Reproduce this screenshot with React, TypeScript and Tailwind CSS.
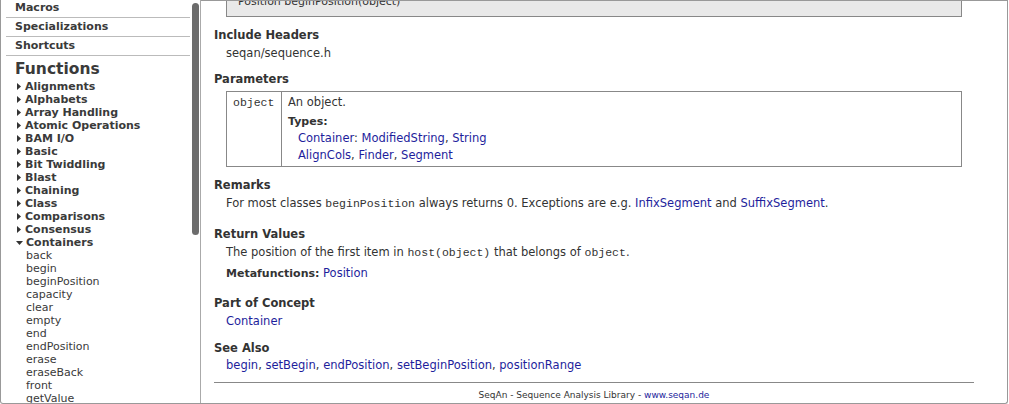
import React from 'react';

const sections = ['Macros', 'Specializations', 'Shortcuts'];

const groups = [
  'Alignments',
  'Alphabets',
  'Array Handling',
  'Atomic Operations',
  'BAM I/O',
  'Basic',
  'Bit Twiddling',
  'Blast',
  'Chaining',
  'Class',
  'Comparisons',
  'Consensus',
];

const containerFns = [
  'back',
  'begin',
  'beginPosition',
  'capacity',
  'clear',
  'empty',
  'end',
  'endPosition',
  'erase',
  'eraseBack',
  'front',
  'getValue',
  'getValueById',
];

const Arrow = ({ open }: { open?: boolean }) =>
  open ? (
    <svg width="7" height="4" viewBox="0 0 7 4" className="ml-[1px] mr-[3px] shrink-0">
      <path d="M0 0 L7 0 L3.5 4 Z" fill="#333" />
    </svg>
  ) : (
    <svg width="4" height="7" viewBox="0 0 4 7" className="ml-[2px] mr-[4px] shrink-0">
      <path d="M0 0 L4 3.5 L0 7 Z" fill="#333" />
    </svg>
  );

const A = ({ children }: { children: React.ReactNode }) => (
  <a className="text-[#1e1e9c] cursor-pointer">{children}</a>
);

const Code = ({ children }: { children: React.ReactNode }) => (
  <code className="font-['Liberation_Mono',monospace] text-[11.5px] leading-none">{children}</code>
);

const Heading = ({ children, className = '' }: { children: React.ReactNode; className?: string }) => (
  <h3 className={`font-bold text-[11.5px] leading-[18px] text-[#333] ${className}`}>{children}</h3>
);

const Sidebar = () => (
  <div className="relative w-[200px] shrink-0 h-full overflow-hidden border-r border-[#aaa]">
    <div className="-mt-[1px] pl-[5px] pr-[10px]">
      {sections.map((s) => (
        <div key={s} className="border-b border-[#bbb] pl-[9px] leading-[18px] font-bold text-[11px] text-[#3a3a3a]">
          {s}
        </div>
      ))}
      <div className="mt-[3px] pl-[9px] leading-[20px] font-bold text-[15.5px] text-[#3a3a3a]">Functions</div>
      <ul className="pt-[1px] pl-[9px]">
        {groups.map((g) => (
          <li key={g} className="flex items-center leading-[13px] font-bold text-[11px] text-[#3a3a3a]">
            <Arrow />
            {g}
          </li>
        ))}
        <li className="flex items-center leading-[13px] font-bold text-[11px] text-[#3a3a3a]">
          <Arrow open />
          Containers
        </li>
        {containerFns.map((f) => (
          <li key={f} className="pl-[11px] leading-[13px] text-[11px] text-[#3a3a3a]">
            {f}
          </li>
        ))}
      </ul>
    </div>
    <div className="absolute left-[191px] top-[3px] w-[7px] h-[232px] rounded-full bg-[#6c6c6c]" />
  </div>
);

const Content = () => (
  <div className="flex-1 h-full overflow-hidden border-t border-[#999] pl-[13px] pr-[33px] text-[11.5px] text-[#333]">
    <div className="-mt-[14px] mx-[12px] border border-[#888] bg-[#e9e9e9] pl-[11px] py-[5px] leading-[18px] text-[11px]">
      Position beginPosition(object)
    </div>

    <Heading className="mt-[9px]">Include Headers</Heading>
    <p className="pl-[12px] leading-[18px]">seqan/sequence.h</p>

    <Heading className="mt-[8px]">Parameters</Heading>
    <table className="mt-[3px] ml-[12px] w-[736px] border-collapse border border-[#888]">
      <tbody>
        <tr>
          <td className="w-[55px] align-top border-r border-[#888] pl-[6px] pt-[2px] leading-[17px]">
            <Code>object</Code>
          </td>
          <td className="align-top pl-[6px] pt-[2px] pb-[2px] leading-[17px]">
            <p>An object.</p>
            <p className="mt-[2px] font-bold text-[11px]">Types:</p>
            <p className="pl-[10px]">
              <A>Container</A>: <A>ModifiedString</A>, <A>String</A>
            </p>
            <p className="pl-[10px]">
              <A>AlignCols</A>, <A>Finder</A>, <A>Segment</A>
            </p>
          </td>
        </tr>
      </tbody>
    </table>

    <Heading className="mt-[9px]">Remarks</Heading>
    <p className="pl-[12px] leading-[18px]">
      For most classes <Code>beginPosition</Code> always returns 0. Exceptions are e.g. <A>InfixSegment</A> and{' '}
      <A>SuffixSegment</A>.
    </p>

    <Heading className="mt-[13px]">Return Values</Heading>
    <p className="pl-[12px] leading-[18px]">
      The position of the first item in <Code>host(object)</Code> that belongs of <Code>object</Code>.
    </p>
    <p className="mt-[3px] pl-[12px] leading-[18px]">
      <span className="font-bold text-[11px]">Metafunctions:</span> <A>Position</A>
    </p>

    <Heading className="mt-[11px]">Part of Concept</Heading>
    <p className="pl-[12px] leading-[18px]">
      <A>Container</A>
    </p>

    <Heading className="mt-[9px]">See Also</Heading>
    <p className="pl-[12px] leading-[17px]">
      <A>begin</A>, <A>setBegin</A>, <A>endPosition</A>, <A>setBeginPosition</A>, <A>positionRange</A>
    </p>

    <hr className="mt-[8px] border-0 border-t border-[#888]" />
    <p className="mt-[3px] text-center text-[9px] leading-[18px]">
      SeqAn - Sequence Analysis Library - <A>www.seqan.de</A>
    </p>
  </div>
);

export default function App() {
  return (
    <div className="w-[1009px] h-[404px] bg-white overflow-hidden font-['DejaVu_Sans','Verdana',sans-serif]">
      <div className="flex w-[1008px] h-[404px] border-l border-b border-r border-[#999] rounded-b-[3px] overflow-hidden">
        <Sidebar />
        <Content />
      </div>
    </div>
  );
}
